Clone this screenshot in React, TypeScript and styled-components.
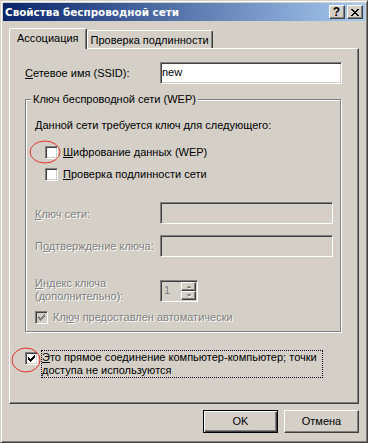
import React from 'react';
import styled, { createGlobalStyle } from 'styled-components';

const face = '#d4d0c8';
const shadow = '#808080';
const darkShadow = '#404040';

const GlobalStyle = createGlobalStyle`
  html, body {
    margin: 0;
    padding: 0;
    background: ${face};
  }
  body {
    font-family: 'Liberation Sans', Arial, sans-serif;
    font-size: 11px;
    color: #000;
  }
  * {
    box-sizing: border-box;
  }
`;

const Window = styled.div`
  position: relative;
  width: 368px;
  height: 443px;
  display: flex;
  flex-direction: column;
  background: ${face};
  border: 1px solid;
  border-color: ${face} ${darkShadow} ${darkShadow} ${face};
  box-shadow: inset 1px 1px #fff, inset -1px -1px ${shadow};
  padding: 2px;
`;

const TitleBar = styled.div`
  height: 18px;
  flex: none;
  display: flex;
  align-items: center;
  justify-content: space-between;
  padding: 0 2px;
  background: linear-gradient(to right, #0a246a, #a6caf0);
`;

const Caption = styled.span`
  color: #fff;
  font-family: 'DejaVu Sans', Verdana, sans-serif;
  font-weight: bold;
  font-size: 10.4px;
  line-height: 13px;
  white-space: nowrap;
`;

const CaptionButtons = styled.div`
  display: flex;
  gap: 2px;
`;

const CaptionButton = styled.div`
  width: 16px;
  height: 14px;
  display: flex;
  align-items: center;
  justify-content: center;
  background: ${face};
  border: 1px solid;
  border-color: #fff ${darkShadow} ${darkShadow} #fff;
  box-shadow: inset -1px -1px ${shadow};
  font-weight: bold;
  font-size: 12px;
  line-height: 12px;
  padding-right: 1px;
`;

const Body = styled.div`
  flex: 1;
  display: flex;
  flex-direction: column;
  padding: 7px 6px 7px;
`;

const TabStrip = styled.div`
  height: 20px;
  display: flex;
  align-items: flex-end;
`;

const Tab = styled.div<{ $active?: boolean }>`
  position: relative;
  z-index: ${(p) => (p.$active ? 1 : 0)};
  height: ${(p) => (p.$active ? 21 : 18)}px;
  margin-bottom: ${(p) => (p.$active ? -1 : 0)}px;
  padding: 3px ${(p) => (p.$active ? 7 : 3)}px 0;
  background: ${face};
  border: 1px solid;
  border-bottom: none;
  border-color: #fff ${darkShadow} transparent #fff;
  border-radius: 2px 2px 0 0;
  box-shadow: inset -1px 0 ${shadow};
  line-height: 13px;
  white-space: nowrap;
`;

const Panel = styled.div`
  height: 356px;
  display: flex;
  flex-direction: column;
  padding: 0 15px;
  border: 1px solid;
  border-color: #fff ${darkShadow} ${darkShadow} #fff;
  box-shadow: inset -1px -1px ${shadow};
`;

const FieldRow = styled.div<{ $top: number; $label: number }>`
  display: grid;
  grid-template-columns: ${(p) => p.$label}px auto;
  align-items: center;
  margin-top: ${(p) => p.$top}px;
`;

const Label = styled.div<{ $disabled?: boolean; $shift?: number }>`
  line-height: 13px;
  white-space: nowrap;
  margin-top: ${(p) => p.$shift ?? 0}px;
  color: ${(p) => (p.$disabled ? shadow : '#000')};
  text-shadow: ${(p) => (p.$disabled ? '1px 1px #fff' : 'none')};
`;

const Key = styled.u`
  text-decoration-thickness: 1px;
  text-underline-offset: 1px;
`;

const Edit = styled.div<{ $width: number; $disabled?: boolean }>`
  width: ${(p) => p.$width}px;
  height: 22px;
  display: flex;
  align-items: center;
  padding: 0 0 1px 1px;
  background: ${(p) => (p.$disabled ? face : '#fff')};
  border: 1px solid;
  border-color: ${shadow} #fff #fff ${shadow};
  box-shadow: inset 1px 1px ${darkShadow}, inset -1px -1px ${face};
  line-height: 13px;
`;

const GroupBox = styled.div`
  margin-top: 15px;
  margin-right: 2px;
  display: flex;
  flex-direction: column;
  padding: 0 6px 7px 9px;
  border: 1px solid ${shadow};
  box-shadow: inset 1px 1px #fff, 1px 1px #fff;
`;

const Legend = styled.span`
  align-self: flex-start;
  margin: -7px 0 0 -4px;
  padding: 0 2px;
  background: ${face};
  line-height: 13px;
  white-space: nowrap;
`;

const Text = styled.div<{ $top: number }>`
  margin-top: ${(p) => p.$top}px;
  line-height: 13px;
  white-space: nowrap;
`;

const CheckRow = styled.div<{ $top: number; $indent: number }>`
  display: flex;
  align-items: center;
  gap: 5px;
  margin-top: ${(p) => p.$top}px;
  padding-left: ${(p) => p.$indent}px;
`;

const Box = styled.span<{ $disabled?: boolean; $shift?: number }>`
  flex: none;
  width: 13px;
  height: 13px;
  display: flex;
  align-items: center;
  justify-content: center;
  margin-top: ${(p) => p.$shift ?? 0}px;
  background: ${(p) => (p.$disabled ? face : '#fff')};
  border: 1px solid;
  border-color: ${shadow} #fff #fff ${shadow};
  box-shadow: inset 1px 1px ${darkShadow}, inset -1px -1px ${face};
`;

const SpinBox = styled.div`
  width: 38px;
  height: 22px;
  display: flex;
  padding: 1px;
  background: ${face};
  border: 1px solid;
  border-color: ${shadow} #fff #fff ${shadow};
  box-shadow: inset 1px 1px ${darkShadow}, inset -1px -1px ${face};
`;

const SpinValue = styled.span`
  flex: 1;
  padding: 2px 0 0 2px;
  line-height: 13px;
  color: ${shadow};
`;

const SpinButtons = styled.div`
  width: 15px;
  display: flex;
  flex-direction: column;
`;

const SpinButton = styled.div`
  flex: 1;
  display: flex;
  align-items: center;
  justify-content: center;
  background: ${face};
  border: 1px solid;
  border-color: #fff ${darkShadow} ${darkShadow} #fff;
  box-shadow: inset -1px -1px ${shadow};
`;

const AdhocRow = styled.div`
  display: flex;
  align-items: flex-start;
  gap: 3px;
  margin-top: 18px;
`;

const FocusLabel = styled.div`
  width: 282px;
  border: 1px dotted #000;
  line-height: 13px;
  white-space: nowrap;
`;

const ButtonRow = styled.div`
  display: flex;
  justify-content: flex-end;
  gap: 6px;
  margin-top: 6px;
`;

const PushButton = styled.div<{ $default?: boolean }>`
  width: 75px;
  height: 23px;
  display: flex;
  align-items: center;
  justify-content: center;
  background: ${face};
  border: 1px solid;
  border-color: ${(p) => (p.$default ? '#000' : `#fff ${darkShadow} ${darkShadow} #fff`)};
  box-shadow: ${(p) =>
    p.$default
      ? `inset 1px 1px #fff, inset -1px -1px ${darkShadow}, inset -2px -2px ${shadow}`
      : `inset -1px -1px ${shadow}`};
  line-height: 13px;
`;

const Annotations = styled.svg`
  position: absolute;
  left: -1px;
  top: -1px;
  width: 368px;
  height: 443px;
  pointer-events: none;
`;

const checkCols = [2, 3, 4, 3, 2, 1, 0];

const CheckMark = ({ color }: { color: string }) => (
  <svg width="7" height="7" viewBox="0 0 7 7" shapeRendering="crispEdges">
    {checkCols.map((y, x) => (
      <rect key={x} x={x} y={y} width="1" height="3" fill={color} />
    ))}
  </svg>
);

const closeRows = ['XX....XX', '.XX..XX.', '..XXXX..', '...XX...', '..XXXX..', '.XX..XX.', 'XX....XX'];

const CloseGlyph = () => (
  <svg width="8" height="7" viewBox="0 0 8 7" shapeRendering="crispEdges">
    {closeRows.map((row, y) =>
      row.split('').map((c, x) => (c === 'X' ? <rect key={`${x}-${y}`} x={x} y={y} width="1" height="1" fill="#000" /> : null)),
    )}
  </svg>
);

const Arrow = ({ up }: { up?: boolean }) => (
  <svg width="6" height="4" viewBox="0 0 6 4" shapeRendering="crispEdges">
    <polygon points={up ? '1,3 4,3 2.5,1.5' : '1,1 4,1 2.5,2.5'} fill="#fff" transform="translate(1,1)" />
    <polygon points={up ? '0,3 5,3 2.5,0.5' : '0,0 5,0 2.5,2.5'} fill={shadow} />
  </svg>
);

export default function App() {
  return (
    <>
      <GlobalStyle />
      <Window>
        <TitleBar>
          <Caption>Свойства беспроводной сети</Caption>
          <CaptionButtons>
            <CaptionButton>?</CaptionButton>
            <CaptionButton>
              <CloseGlyph />
            </CaptionButton>
          </CaptionButtons>
        </TitleBar>

        <Body>
          <TabStrip>
            <Tab $active>Ассоциация</Tab>
            <Tab>Проверка подлинности</Tab>
          </TabStrip>

          <Panel>
            <FieldRow $top={13} $label={135}>
              <Label>
                <Key>С</Key>етевое имя (SSID):
              </Label>
              <Edit $width={182}>new</Edit>
            </FieldRow>

            <GroupBox>
              <Legend>Ключ беспроводной сети (WEP)</Legend>
              <Text $top={13}>Данной сети требуется ключ для следующего:</Text>
              <CheckRow $top={14} $indent={10}>
                <Box />
                <Label>
                  <Key>Ш</Key>ифрование данных (WEP)
                </Label>
              </CheckRow>
              <CheckRow $top={9} $indent={10}>
                <Box />
                <Label>
                  <Key>П</Key>роверка подлинности сети
                </Label>
              </CheckRow>

              <FieldRow $top={21} $label={125}>
                <Label $disabled $shift={2}>
                  <Key>К</Key>люч сети:
                </Label>
                <Edit $width={173} $disabled />
              </FieldRow>
              <FieldRow $top={11} $label={125}>
                <Label $disabled>
                  П<Key>о</Key>дтверждение ключа:
                </Label>
                <Edit $width={173} $disabled />
              </FieldRow>
              <FieldRow $top={22} $label={125}>
                <Label $disabled $shift={-2}>
                  <Key>И</Key>ндекс ключа
                  <br />
                  (дополнительно):
                </Label>
                <SpinBox>
                  <SpinValue>1</SpinValue>
                  <SpinButtons>
                    <SpinButton>
                      <Arrow up />
                    </SpinButton>
                    <SpinButton>
                      <Arrow />
                    </SpinButton>
                  </SpinButtons>
                </SpinBox>
              </FieldRow>
              <CheckRow $top={8} $indent={0}>
                <Box $disabled>
                  <CheckMark color={shadow} />
                </Box>
                <Label $disabled>
                  Кл<Key>ю</Key>ч предоставлен автоматически
                </Label>
              </CheckRow>
            </GroupBox>

            <AdhocRow>
              <Box $shift={2}>
                <CheckMark color="#000" />
              </Box>
              <FocusLabel>
                <Key>Э</Key>то прямое соединение компьютер-компьютер; точки
                <br />
                доступа не используются
              </FocusLabel>
            </AdhocRow>
          </Panel>

          <ButtonRow>
            <PushButton $default>OK</PushButton>
            <PushButton>Отмена</PushButton>
          </ButtonRow>
        </Body>

        <Annotations viewBox="0 0 368 443">
          <ellipse cx="45" cy="152" rx="15" ry="11" fill="none" stroke="#e8302c" strokeWidth="1" />
          <ellipse cx="26" cy="360" rx="14" ry="12" fill="none" stroke="#e8302c" strokeWidth="1" />
        </Annotations>
      </Window>
    </>
  );
}
